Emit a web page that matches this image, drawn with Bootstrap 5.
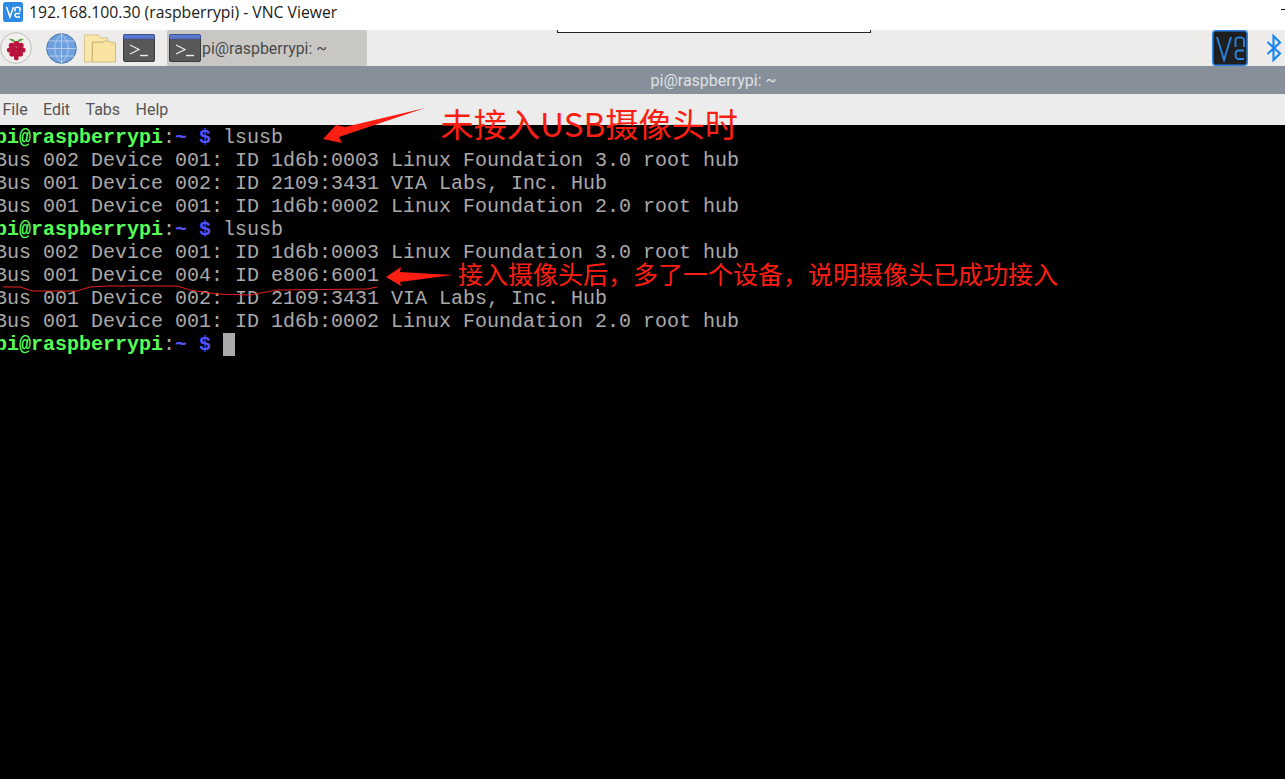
<!DOCTYPE html>
<html lang="zh">
<head>
<meta charset="utf-8">
<title>VNC Viewer</title>
<link href="https://cdn.jsdelivr.net/npm/bootstrap@5.3.0/dist/css/bootstrap.min.css" rel="stylesheet">
<style>
html,body{height:100%;overflow:hidden;background:#000}
.screen-wrap{height:779px;width:1285px;position:relative;overflow:hidden}
.win-title{height:30px;background:#fff;color:#1a1a1a;font:15.75px "Open Sans","Noto Sans",sans-serif;padding:0 0 6px 3px;gap:6px}
.win-min{margin-left:auto;width:4px;height:1px;background:#111;margin-bottom:5px}
.pi-panel{height:36px;background:#edecea;position:relative}
.panel-ico{display:block;flex:none}
.ico-globe{margin-left:13px}
.ico-folder{margin-left:7px}
.ico-term{margin-left:7px}
.ico-vnc{margin-left:auto}
.ico-bt{margin:0 3px 0 18px}
.task-btn{background:#c9c7c3;height:36px;width:200px;margin-left:12px;padding-left:2px;border-radius:2px;color:#4a4a4a;font:15.9px Roboto,sans-serif;gap:1px}
.dlg-frag{position:absolute;left:557px;top:0;width:314px;height:3px;background:#fff;border:1px solid #222;border-top:0}
.term-head{height:28px;background:#87909a;color:#dfe2e5;font:16px Roboto,sans-serif;padding-left:142px}
.term-menu{height:31px;background:#ececec;color:#555;font:16px Roboto,sans-serif;padding-left:2.500px;gap:15.400px}
.term-body{background:#000;flex:1 1 auto;padding-top:1px}
.term-text{margin:0 0 0 -5px;font:20px/23px "Liberation Mono",monospace;color:#aaa;overflow:visible;white-space:pre}
.pg{color:#55ff55;font-weight:700}
.pb{color:#5555ff;font-weight:700}
.cursor{display:inline-block;width:12px;height:23px;background:#aaa;vertical-align:top}
.note{position:absolute;color:#fb1e12;font-family:"Noto Sans CJK SC",sans-serif;white-space:nowrap;line-height:1;font-weight:400}
.note-a{left:440.5px;top:106px;font-size:33.2px}
.note-b{left:458px;top:261px;font-size:25px}
.ink{position:absolute;left:0;top:0;pointer-events:none}
</style>
</head>
<body>
<div class="screen-wrap d-flex flex-column">
  <div class="win-title d-flex align-items-center">
    <svg class="panel-ico" width="20" height="20" viewBox="0 0 20 20"><rect width="20" height="20" rx="2.500" fill="#2f8ae6"/><path d="M3.500 5 7 15 10.500 5" fill="none" stroke="#fff" stroke-width="1.500"/><path d="M12 9.500V6.800c0-2 5-2 5 0v2.700M17 11.500h-3.200c-2.400 0-2.400 3.400 0 3.400H17" fill="none" stroke="#fff" stroke-width="1.500"/></svg>
    <span>192.168.100.30 (raspberrypi) - VNC Viewer</span>
    <span class="win-min"></span>
  </div>
  <div class="pi-panel d-flex align-items-center">
    <svg class="panel-ico" width="33" height="32" viewBox="0 0 33 32"><circle cx="16" cy="16" r="15.400" fill="#f1f0ee" stroke="#bdbcb8"/><path d="M15.500 10c-2-.2-5-1-6.500-3 3-.6 5.500.3 6.500 3zM17 10c2-.2 5-1 6.500-3-3-.6-5.500.3-6.500 3z" fill="#5aa03c"/><g fill="#b8133d"><circle cx="16.300" cy="12" r="3"/><circle cx="11.500" cy="13.500" r="2.700"/><circle cx="21" cy="13.500" r="2.700"/><circle cx="9.500" cy="18" r="2.600"/><circle cx="23" cy="18" r="2.600"/><circle cx="14" cy="17.500" r="2.900"/><circle cx="18.800" cy="17.500" r="2.900"/><circle cx="12" cy="22" r="2.600"/><circle cx="20.500" cy="22" r="2.600"/><circle cx="16.300" cy="22.500" r="2.900"/><circle cx="16.300" cy="26" r="2.400"/></g></svg>
    <svg class="panel-ico ico-globe" width="31" height="31" viewBox="0 0 31 31"><circle cx="15.500" cy="15.500" r="14.800" fill="#6f9fdc" stroke="#4c78ab"/><path d="M15.500 1v29M1 15.500h29M3 8h25M3 23h25M15.500 1c-9 8-9 21 0 29M15.500 1c9 8 9 21 0 29" fill="none" stroke="#c4d8f0" stroke-width=".8"/></svg>
    <svg class="panel-ico ico-folder" width="32" height="29" viewBox="0 0 32 29"><path d="M.5 1h14l2 3h7v4H8v20H.5z" fill="#f9e7ab" stroke="#d6c387"/><path d="M8.500 8.500h10l2 -1.500h3l8 2v19h-23z" fill="#f9e3a0" stroke="#cfba7e"/></svg>
    <svg class="panel-ico ico-term" width="32" height="28" viewBox="0 0 32 28"><rect x=".5" y=".5" width="31" height="27" rx="1.500" fill="#585858" stroke="#3c3c3c"/><path d="M.5 1.500Q.5 .5 1.500 .5h29Q31.500 .5 31.500 1.500V5H.5z" fill="#5a76cf" stroke="#3c4e8c" stroke-width=".6"/><path d="M7 11l9 4.500-9 4.500" fill="none" stroke="#eee" stroke-width="1.200"/><path d="M17 21.500h8" stroke="#eee" stroke-width="1.400"/></svg>
    <div class="task-btn d-flex align-items-center">
      <svg class="panel-ico" width="32" height="28" viewBox="0 0 32 28"><rect x=".5" y=".5" width="31" height="27" rx="1.500" fill="#585858" stroke="#3c3c3c"/><path d="M.5 1.500Q.5 .5 1.500 .5h29Q31.500 .5 31.500 1.500V5H.5z" fill="#5a76cf" stroke="#3c4e8c" stroke-width=".6"/><path d="M7 11l9 4.500-9 4.500" fill="none" stroke="#eee" stroke-width="1.200"/><path d="M17 21.500h8" stroke="#eee" stroke-width="1.400"/></svg>
      <span>pi@raspberrypi: ~</span>
    </div>
    <svg class="panel-ico ico-vnc" width="36" height="36" viewBox="0 0 36 36"><rect x=".8" y=".8" width="34.400" height="34.400" rx="3" fill="#1d1f21" stroke="#2a86e4" stroke-width="1.600"/><path d="M5 7l7 23 7-23" fill="none" stroke="#2a86e4" stroke-width="1.800"/><path d="M23.500 17V10c0-3.500 8.500-3.500 8.500 0v7M32 20.500h-5.500c-4 0-4 8.500 0 8.500H32" fill="none" stroke="#2a86e4" stroke-width="1.800"/></svg>
    <svg class="panel-ico ico-bt" width="16" height="28" viewBox="0 0 16 28"><path d="M1.500 8 14 19.500 7.500 26V2L14 8.500 1.500 20" fill="none" stroke="#1e88f0" stroke-width="2.200"/></svg>
    <div class="dlg-frag"></div>
  </div>
  <div class="term-head d-flex align-items-center justify-content-center">pi@raspberrypi: ~</div>
  <div class="term-menu d-flex align-items-center"><span>File</span><span>Edit</span><span>Tabs</span><span>Help</span></div>
  <div class="term-body">
<pre class="term-text"><span class="pg">pi@raspberrypi</span>:<span class="pb">~ $</span> lsusb
Bus 002 Device 001: ID 1d6b:0003 Linux Foundation 3.0 root hub
Bus 001 Device 002: ID 2109:3431 VIA Labs, Inc. Hub
Bus 001 Device 001: ID 1d6b:0002 Linux Foundation 2.0 root hub
<span class="pg">pi@raspberrypi</span>:<span class="pb">~ $</span> lsusb
Bus 002 Device 001: ID 1d6b:0003 Linux Foundation 3.0 root hub
Bus 001 Device 004: ID e806:6001
Bus 001 Device 002: ID 2109:3431 VIA Labs, Inc. Hub
Bus 001 Device 001: ID 1d6b:0002 Linux Foundation 2.0 root hub
<span class="pg">pi@raspberrypi</span>:<span class="pb">~ $</span> <span class="cursor"></span></pre>
  </div>
  <div class="note note-a">未接入USB摄像头时</div>
  <div class="note note-b">接入摄像头后，多了一个设备，说明摄像头已成功接入</div>
  <svg class="ink" width="1285" height="779" viewBox="0 0 1285 779">
    <path d="M425 108 345 127 336 125 323 139 342 143 339 137z" fill="#fb1e12"/>
    <path d="M386 277 401 267 400 272 453 275 400 282 401 286z" fill="#fb1e12"/>
    <path d="M3 287 20 287 33 291 77 291 90 287 107 286 177 286 190 290 217 294 250 295 277 290 367 289 377 287" fill="none" stroke="#e8201a" stroke-width="1"/>
  </svg>
</div>
</body>
</html>
